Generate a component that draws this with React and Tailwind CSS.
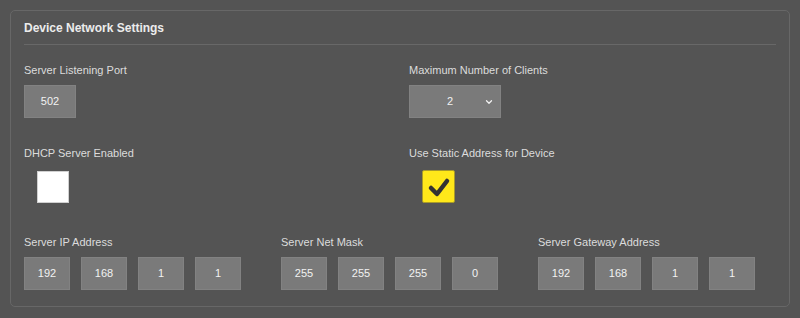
import { ChevronDown } from "lucide-react";

const Field = ({ value, className = "" }) => (
  <div
    className={`flex items-center justify-center h-[33px] bg-[#7a7a7a] border border-[#828282] text-[11px] text-[#f2f2f2] ${className}`}
  >
    {value}
  </div>
);

const Label = ({ children }) => (
  <div className="text-[11px] leading-4 text-[#dcdcdc]">{children}</div>
);

const AddressGroup = ({ label, parts }) => (
  <div>
    <Label>{label}</Label>
    <div className="flex gap-[11px] mt-[7px]">
      {parts.map((p, i) => (
        <Field key={i} value={p} className="w-[46px]" />
      ))}
    </div>
  </div>
);

export default function App() {
  return (
    <div
      className="w-[800px] h-[318px] bg-[#545454] p-[10px]"
      style={{ fontFamily: '"Liberation Sans", Arial, sans-serif' }}
    >
      <div className="h-[297px] border border-[#676767] rounded-[5px] px-[13px] pt-[9px]">
        <div className="text-[12px] leading-4 font-bold text-[#ececec] pb-[8px] border-b border-[#686868]">
          Device Network Settings
        </div>

        {/* port + clients */}
        <div className="grid grid-cols-[385px_1fr] mt-[17px]">
          <div>
            <Label>Server Listening Port</Label>
            <Field value="502" className="w-[52px] mt-[7px]" />
          </div>
          <div>
            <Label>Maximum Number of Clients</Label>
            <div className="relative w-[92px] mt-[7px]">
              <Field value="2" className="w-[92px] pr-[10px]" />
              <ChevronDown
                size={10}
                strokeWidth={3}
                className="absolute right-[7px] top-[12px] text-[#f2f2f2]"
              />
            </div>
          </div>
        </div>

        {/* checkboxes */}
        <div className="grid grid-cols-[385px_1fr] mt-[27px]">
          <div>
            <Label>DHCP Server Enabled</Label>
            <div className="ml-[13px] mt-[10px] w-[32px] h-[32px] bg-white border border-[#d0d0d0]" />
          </div>
          <div>
            <Label>Use Static Address for Device</Label>
            <div className="ml-[13px] mt-[9px] w-[33px] h-[33px] bg-[#ffe81a] border border-[#a89a2a] rounded-[2px] flex items-center justify-center">
              <svg width="24" height="22" viewBox="0 0 24 22">
                <polyline
                  points="4,12 10,18 20,5"
                  fill="none"
                  stroke="#333333"
                  strokeWidth="4.5"
                  strokeLinecap="round"
                  strokeLinejoin="round"
                />
              </svg>
            </div>
          </div>
        </div>

        {/* addresses */}
        <div className="grid grid-cols-[257px_257px_1fr] mt-[31px]">
          <AddressGroup label="Server IP Address" parts={["192", "168", "1", "1"]} />
          <AddressGroup label="Server Net Mask" parts={["255", "255", "255", "0"]} />
          <AddressGroup label="Server Gateway Address" parts={["192", "168", "1", "1"]} />
        </div>
      </div>
    </div>
  );
}
